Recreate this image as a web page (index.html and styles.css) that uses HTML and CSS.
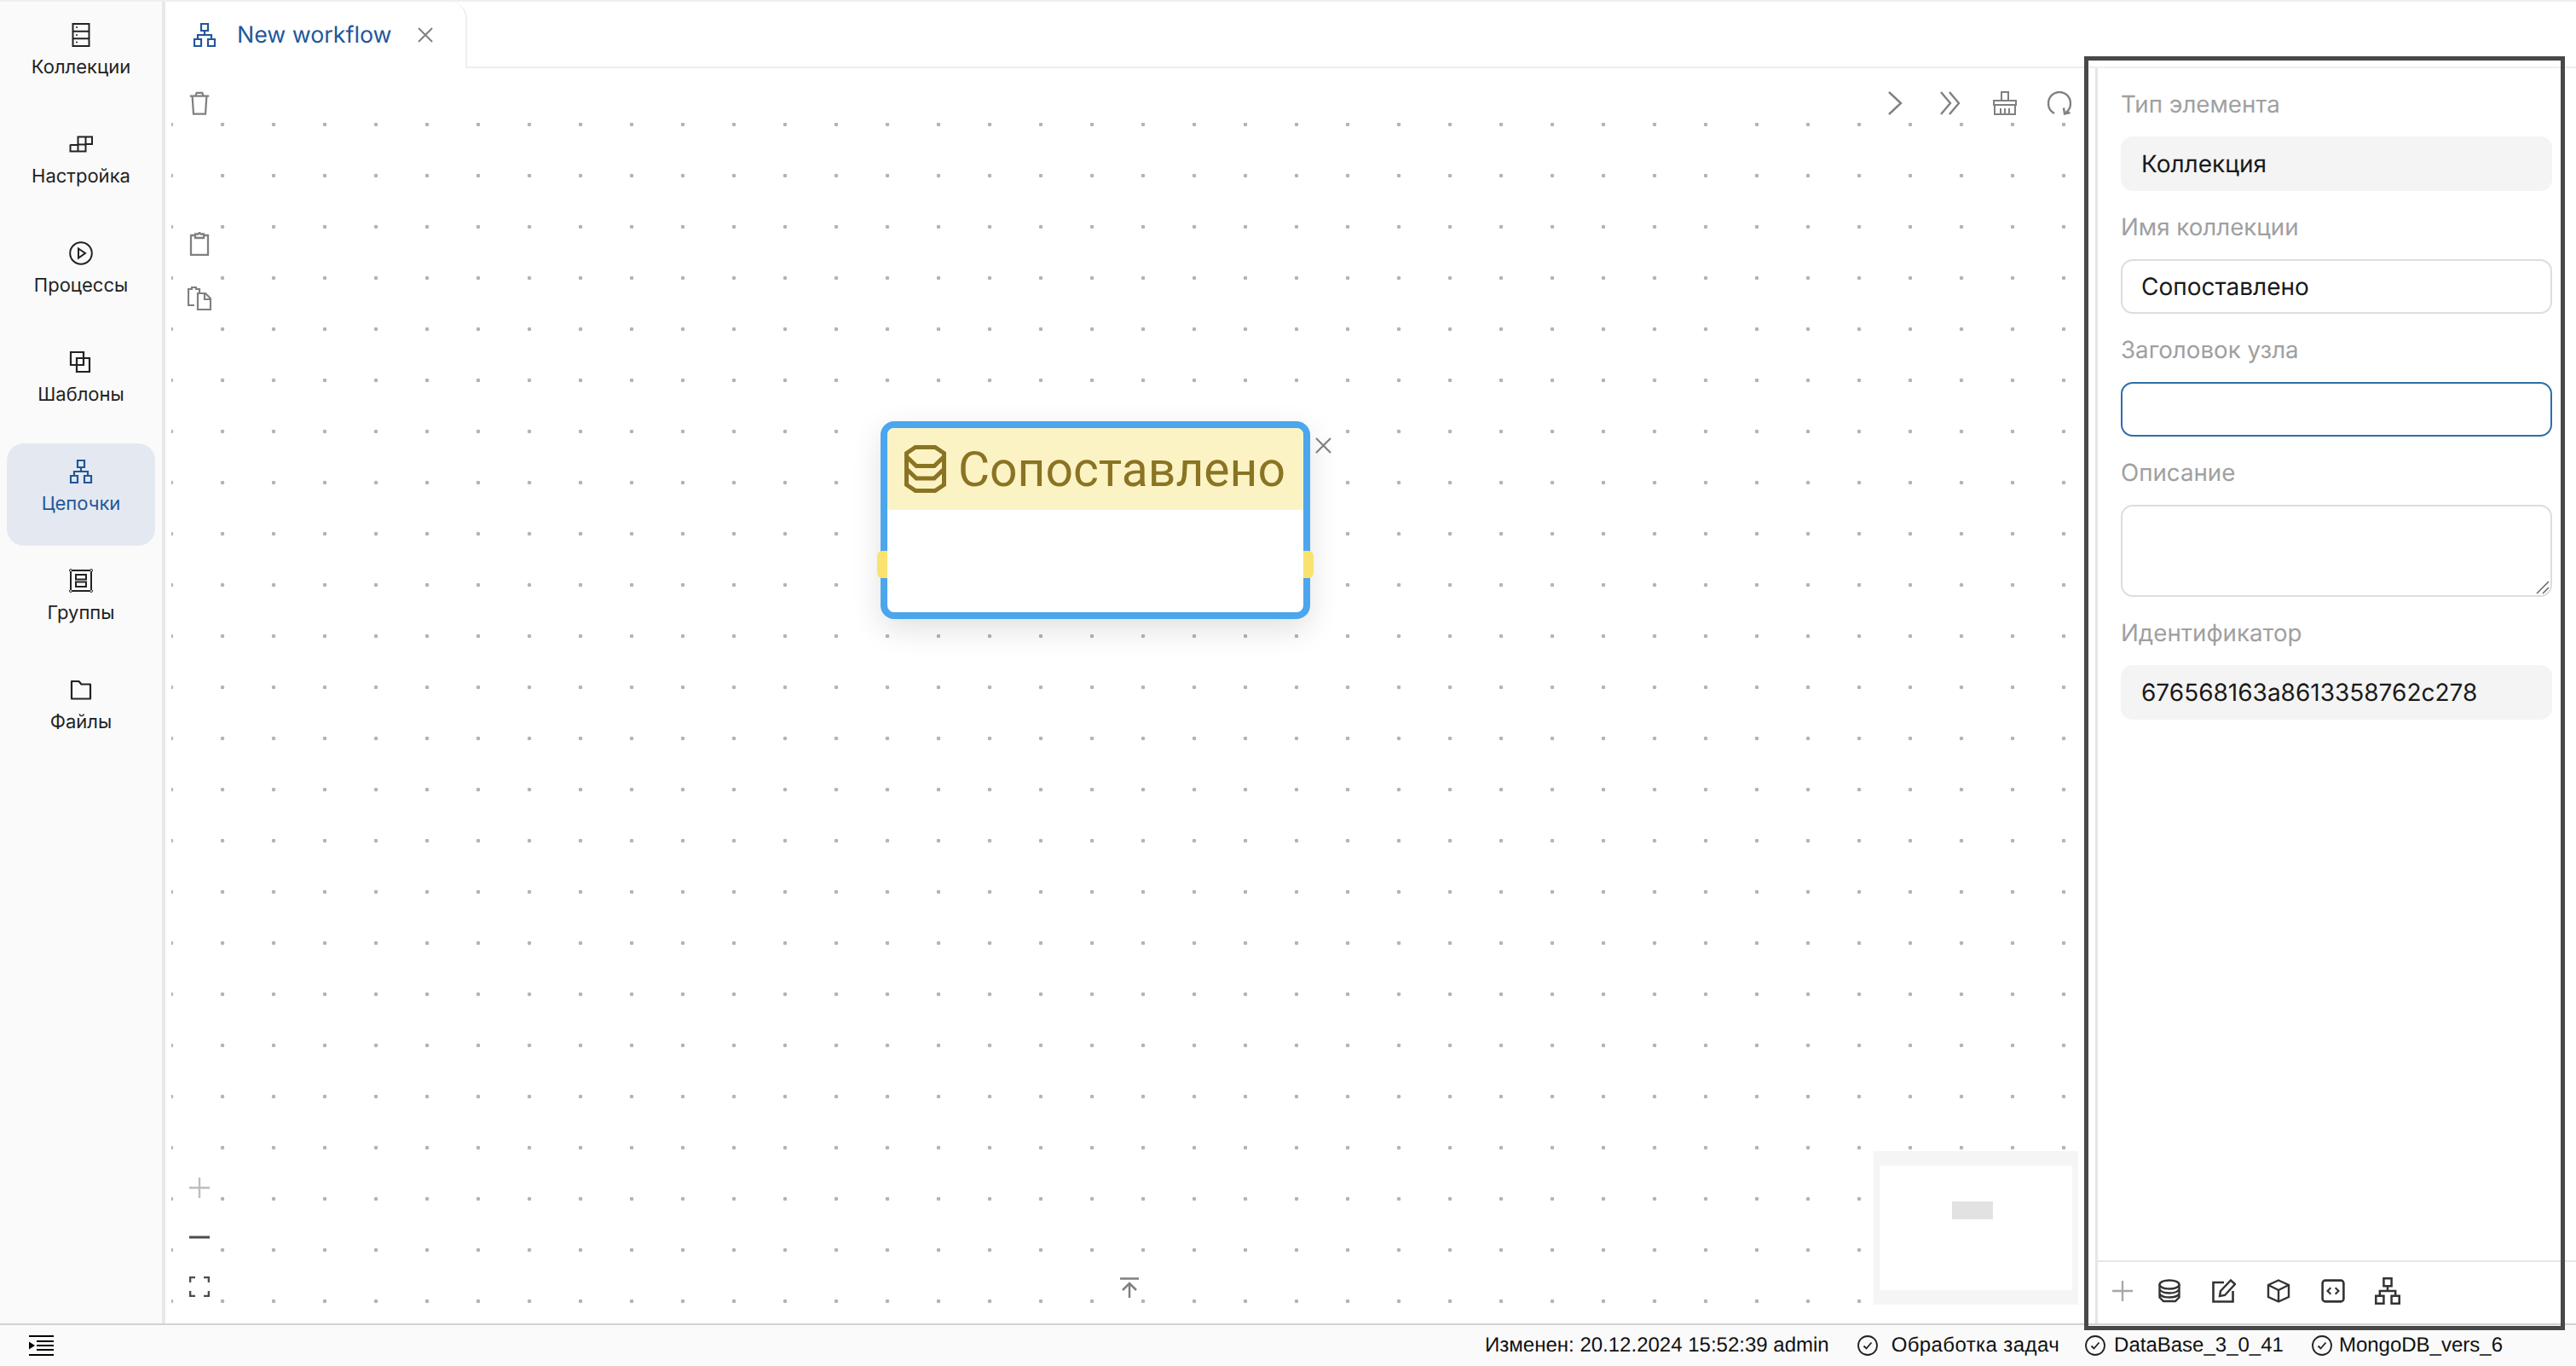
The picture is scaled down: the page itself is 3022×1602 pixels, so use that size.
FILE: index.html
```html
<!DOCTYPE html>
<html lang="ru">
<head>
<meta charset="utf-8">
<title>New workflow</title>
<link rel="stylesheet" href="styles.css">
</head>
<body>
<svg class="defs" width="0" height="0">
  <symbol id="tree" viewBox="0 0 26 28">
    <path d="M9 1h8v8H9zM1 19h8v8H1zM17 19h8v8h-8zM13 9v5M5 19v-5h16v5" fill="none" stroke="currentColor" stroke-width="2.2"/>
  </symbol>
  <symbol id="check" viewBox="0 0 24 24">
    <circle cx="12" cy="12" r="11" fill="none" stroke="currentColor" stroke-width="1.8"/>
    <path d="M7.5 12.5l3 3 6-7" fill="none" stroke="currentColor" stroke-width="1.8"/>
  </symbol>
</svg>
<div class="app">
  <div class="main">
    <nav class="sidebar">
      <a class="nav-item">
        <svg class="nav-icon" viewBox="0 0 28 28"><path d="M4.5 1h19v26h-19zM4.5 9.7h19M4.5 18.3h19" fill="none" stroke="currentColor" stroke-width="2"/><path d="M8 5h2M8 14h2M8 22.500h2" stroke="currentColor" stroke-width="1.600"/></svg>
        <span>Коллекции</span>
      </a>
      <a class="nav-item">
        <svg class="nav-icon" viewBox="0 0 28 28"><path d="M1.500 15h9M1.500 14.500v8h18v-8h-9M10.500 14.500v8M10.500 14.500v-9h16.500v8.500h-7.500M19.500 5.500v9" fill="none" stroke="currentColor" stroke-width="2"/></svg>
        <span>Настройка</span>
      </a>
      <a class="nav-item">
        <svg class="nav-icon" viewBox="0 0 28 28"><circle cx="14" cy="14" r="12.800" fill="none" stroke="currentColor" stroke-width="2"/><path d="M11 8.500l8 5.500-8 5.500z" fill="none" stroke="currentColor" stroke-width="2"/></svg>
        <span>Процессы</span>
      </a>
      <a class="nav-item">
        <svg class="nav-icon" viewBox="0 0 28 28"><path d="M2 2h15v15H2zM9 9h15v16H9z" fill="none" stroke="currentColor" stroke-width="2.200"/></svg>
        <span>Шаблоны</span>
      </a>
      <a class="nav-item active">
        <svg class="nav-icon"><use href="#tree"/></svg>
        <span>Цепочки</span>
      </a>
      <a class="nav-item">
        <svg class="nav-icon" viewBox="0 0 28 28"><path d="M2 2h24v24H2z" fill="none" stroke="currentColor" stroke-width="2"/><path d="M8 7h12v5.500H8zM8 15.500h12V21H8z" fill="none" stroke="currentColor" stroke-width="2"/><circle cx="2" cy="2" r="1.500" fill="#fafafa" stroke="currentColor"/><circle cx="26" cy="2" r="1.500" fill="#fafafa" stroke="currentColor"/><circle cx="2" cy="26" r="1.500" fill="#fafafa" stroke="currentColor"/><circle cx="26" cy="26" r="1.500" fill="#fafafa" stroke="currentColor"/></svg>
        <span>Группы</span>
      </a>
      <a class="nav-item">
        <svg class="nav-icon" viewBox="0 0 28 28"><path d="M3 4h8.500l3 3.500H25v17H3z" fill="none" stroke="currentColor" stroke-width="2.200" stroke-linejoin="round"/></svg>
        <span>Файлы</span>
      </a>
    </nav>
    <div class="work">
      <div class="tabs">
        <div class="tab">
          <svg class="tab-icon"><use href="#tree"/></svg>
          <span class="tab-title">New workflow</span>
          <svg class="tab-close" viewBox="0 0 18 18"><path d="M1 1l16 16M17 1L1 17" stroke="currentColor" stroke-width="2"/></svg>
        </div>
        <div class="tabs-rest"></div>
      </div>
      <div class="work-body">
        <section class="flow">
          <div class="toolbar">
            <button class="tool trash-tool"><svg viewBox="0 0 28 30"><path d="M2 6h24M9 6l1.500-4h7L19 6M5 6l1.500 22.500h15L23 6" fill="none" stroke="currentColor" stroke-width="2.400"/></svg></button>
            <div class="run-tools">
              <button class="tool"><svg viewBox="0 0 28 28"><path d="M6 1l14 13L6 27" fill="none" stroke="currentColor" stroke-width="2.400"/></svg></button>
              <button class="tool"><svg viewBox="0 0 28 28"><path d="M3 1l11 13L3 27M13 1l11 13-11 13" fill="none" stroke="currentColor" stroke-width="2.400"/></svg></button>
              <button class="tool"><svg viewBox="0 0 28 28"><path d="M10 11V1h8v10M1 11h26v5H1zM2 16v11h24V16M9 20v7M14 20v7M19 20v7" fill="none" stroke="currentColor" stroke-width="2"/></svg></button>
              <button class="tool"><svg viewBox="0 0 28 28"><path d="M8 26C3.500 23.500 1 19.500 1 14.500 1 7 6.500 1 14 1s13 6 13 13.500c0 5-2.500 9-7 11.500M19 19.500l1 7 6.500-1.500" fill="none" stroke="currentColor" stroke-width="2.400"/></svg></button>
            </div>
          </div>
          <div class="canvas">
            <div class="paste-tools">
              <button class="tool"><svg viewBox="0 0 28 28"><path d="M9 4H4v23h20V4h-5M9 2.500h3.500L14 .8 15.500 2.500H19V7H9z" fill="none" stroke="currentColor" stroke-width="2.300"/></svg></button>
              <button class="tool"><svg viewBox="0 0 28 28"><path d="M8 22H1V3h4V1h5v2h4v4M12 8h9l6 6v13H12zM20 8v7h7" fill="none" stroke="currentColor" stroke-width="2.200"/></svg></button>
            </div>
            <div class="node">
              <div class="node-head">
                <svg class="node-icon" viewBox="0 0 49 56"><path d="M13 2.500h23L46.500 9.500v37L36 53.500H13L2.500 46.500v-37zM3 14l11 10.500h21L46 14M3 28.500L14 39h21l11-10.500" fill="none" stroke="currentColor" stroke-width="5"/></svg>
                <span class="node-title">Сопоставлено</span>
              </div>
              <i class="port port-in"></i>
              <i class="port port-out"></i>
              <svg class="node-close" viewBox="0 0 19 19"><path d="M1 1l17 17M18 1L1 18" stroke="currentColor" stroke-width="2.200"/></svg>
            </div>
            <div class="zoom-tools">
              <button class="round faint"><svg viewBox="0 0 24 24"><path d="M12 0v24M0 12h24" stroke="currentColor" stroke-width="2.400"/></svg></button>
              <button class="round"><svg viewBox="0 0 24 24"><path d="M0 12h24" stroke="currentColor" stroke-width="3"/></svg></button>
              <button class="round"><svg viewBox="0 0 24 24"><path d="M7 1H1v6M17 1h6v6M1 17v6h6M23 17v6h-6" fill="none" stroke="currentColor" stroke-width="2.600"/></svg></button>
            </div>
            <svg class="fit-top" viewBox="0 0 22 24"><path d="M0 1.500h22M11 24V7M3 15l8-8 8 8" fill="none" stroke="currentColor" stroke-width="2.500"/></svg>
            <div class="minimap"><div class="minimap-view"><i class="minimap-node"></i></div></div>
          </div>
        </section>
        <aside class="panel">
          <div class="form">
            <div class="group">
              <label class="label">Тип элемента</label>
              <div class="field readonly">Коллекция</div>
            </div>
            <div class="group">
              <label class="label">Имя коллекции</label>
              <div class="field">Сопоставлено</div>
            </div>
            <div class="group">
              <label class="label">Заголовок узла</label>
              <div class="field focused"></div>
            </div>
            <div class="group">
              <label class="label">Описание</label>
              <div class="area-wrap">
                <textarea class="field area"></textarea>
                <svg class="grip" viewBox="0 0 16 16"><path d="M15 1L1 15M15 8l-7 7" fill="none" stroke="currentColor" stroke-width="1.500"/></svg>
              </div>
            </div>
            <div class="group">
              <label class="label">Идентификатор</label>
              <div class="field readonly">676568163a8613358762c278</div>
            </div>
          </div>
          <div class="panel-bar">
            <button class="pbtn faint"><svg viewBox="0 0 24 24"><path d="M12 0v24M0 12h24" stroke="currentColor" stroke-width="2.400"/></svg></button>
            <button class="pbtn"><svg viewBox="0 0 26 28"><ellipse cx="13" cy="6.500" rx="11.500" ry="5" fill="none" stroke="currentColor" stroke-width="2.400"/><path d="M1.500 6.500v15L6 26h14l4.500-4.500v-15M1.500 12c2 3.500 7 4.500 11.500 4.500s9.500-1 11.500-4.500M1.500 17.500c2 3 7 4 11.500 4s9.500-1 11.500-4" fill="none" stroke="currentColor" stroke-width="2.400"/></svg></button>
            <button class="pbtn"><svg viewBox="0 0 28 28"><path d="M14 4H1.500v22.500h23V14" fill="none" stroke="currentColor" stroke-width="2.600"/><path d="M9 20l1-6L22 1.500l5 4.500L15 19z" fill="none" stroke="currentColor" stroke-width="2.400"/></svg></button>
            <button class="pbtn"><svg viewBox="0 0 28 28"><path d="M14 1.500l12 5.500v14l-12 5.500L2 21V7zM2 7l12 6 12-6M14 13v13.500" fill="none" stroke="currentColor" stroke-width="2.400"/></svg></button>
            <button class="pbtn"><svg viewBox="0 0 26 26"><rect x="1.500" y="1.500" width="23" height="23" rx="3" fill="none" stroke="currentColor" stroke-width="2.400"/><path d="M10.500 9.500L7 13l3.500 3.500M15.500 9.500L19 13l-3.500 3.500" fill="none" stroke="currentColor" stroke-width="2"/></svg></button>
            <button class="pbtn tall"><svg><use href="#tree"/></svg></button>
          </div>
        </aside>
      </div>
    </div>
  </div>
  <footer class="status">
    <svg class="menu-icon" viewBox="0 0 30 26"><path d="M1 2h29M10 13h20M10 8h20M10 18h20M1 24h29" stroke="currentColor" stroke-width="2.200"/><path d="M1 8.500l7 4.500-7 4.500z" fill="currentColor"/></svg>
    <div class="status-items">
      <span class="modified">Изменен: 20.12.2024 15:52:39 admin</span>
      <span class="st st-tasks"><svg><use href="#check"/></svg>Обработка задач</span>
      <span class="st st-db"><svg><use href="#check"/></svg>DataBase_3_0_41</span>
      <span class="st st-mongo"><svg><use href="#check"/></svg>MongoDB_vers_6</span>
    </div>
  </footer>
</div>
<div class="highlight"></div>
</body>
</html>
```

FILE: styles.css
```css
* { box-sizing: border-box; }
html, body { margin: 0; height: 100%; background: #fff; overflow: hidden; }
body { font-family: Inter, "Noto Sans", sans-serif; color: #222; position: relative; text-rendering: geometricPrecision; }
.defs { position: absolute; }
button { border: 0; background: none; padding: 0; display: flex; align-items: center; justify-content: center; }
svg { display: block; }

.app { height: 1602px; display: flex; flex-direction: column; }
.main { flex: 1; display: flex; min-height: 0; border-top: 2px solid #efefef; }

/* Sidebar */
.sidebar {
  width: 194px; flex: none; background: #fafafa; border-right: 4px solid #e8e8e8;
  padding: 6px 8px 0; display: flex; flex-direction: column; gap: 8px;
}
.nav-item {
  height: 120px; border-radius: 20px; display: flex; flex-direction: column; align-items: center;
  padding-top: 19px; gap: 11px; font-size: 22px; line-height: 26px; color: #222;
}
.nav-icon { width: 28px; height: 28px; }
.nav-item.active { background: #e4e9f1; color: #22579a; }

/* Tabs */
.work { flex: 1; min-width: 0; display: flex; flex-direction: column; }
.tabs { height: 78px; flex: none; display: flex; }
.tab {
  width: 354px; display: flex; align-items: center; padding: 0 0 0 33px; background: #fff;
  border-right: 2px solid #eee; border-top-left-radius: 20px; border-top-right-radius: 20px;
  color: #22579a;
}
.tab-icon { width: 26px; height: 28px; }
.tab-title { margin-left: 25px; width: 181px; font-size: 26.800px; line-height: 34px; white-space: nowrap; }
.tab-close { width: 18px; height: 18px; margin-left: 31px; color: #808080; }
.tabs-rest { flex: 1; border-bottom: 2px solid #eee; }

/* Flow */
.work-body { flex: 1; display: flex; min-height: 0; }
.flow { flex: 1; min-width: 0; display: flex; flex-direction: column; padding-left: 7px; }
.toolbar { height: 64px; flex: none; display: flex; justify-content: space-between; align-items: center; padding: 18px 10px 0 0; color: #808080; }
.tool { width: 64px; height: 28px; color: #808080; }
.tool svg { width: 28px; height: 28px; }
.trash-tool { margin-left: 1px; }
.run-tools { display: flex; }

.canvas {
  flex: 1; position: relative;
  background-image: radial-gradient(circle, #b4b4b4 2px, transparent 2.600px);
  background-size: 60px 60px; background-position: 30px -28px;
}
.paste-tools { position: absolute; left: 1px; top: 128px; display: flex; flex-direction: column; gap: 36px; }
.zoom-tools { position: absolute; left: 7px; top: 1223px; display: flex; flex-direction: column; gap: 6px; }
.round { width: 52px; height: 52px; border-radius: 50%; background: #fff; color: #4d4d4d; }
.round svg { width: 24px; height: 24px; }
.faint { color: #bdbdbd; }
.fit-top { position: absolute; left: 1113px; top: 1354px; width: 22px; height: 24px; color: #808080; }

.node {
  position: absolute; left: 832px; top: 350px; width: 504px; height: 232px;
  background: #fff; border: 8px solid #4ba6ee; border-radius: 16px;
  box-shadow: 0 12px 36px rgba(0, 0, 0, .12);
}
.node-head {
  height: 96px; background: #fcf3c5; color: #8a7423; display: flex; align-items: center;
  padding-left: 20px; gap: 14px; border-radius: 8px 8px 0 0;
}
.node-icon { width: 49px; height: 56px; flex: none; }
.node-title { font-family: Roboto, sans-serif; font-size: 57px; line-height: 66px; white-space: nowrap; padding-top: 1px; }
.port { position: absolute; width: 12px; height: 32px; top: 144px; background: #fae26f; }
.port-in { left: -12px; border-radius: 6px 0 0 6px; }
.port-out { right: -12px; border-radius: 0 6px 6px 0; }
.node-close { position: absolute; left: 502px; top: 11px; width: 19px; height: 19px; color: #808080; }

.minimap { position: absolute; left: 1997px; top: 1206px; width: 240px; height: 180px; background: #f5f5f5; padding: 17px 7px; }
.minimap-view { position: relative; height: 146px; background: #fff; }
.minimap-node { position: absolute; left: 85px; top: 42px; width: 48px; height: 21px; background: #e2e2e2; }

/* Panel */
.panel { width: 564px; flex: none; display: flex; flex-direction: column; border-left: 3px solid #e6e6e6; }
.form { flex: 1; padding: 27px 28px 0 27px; display: flex; flex-direction: column; gap: 27px; }
.group { display: flex; flex-direction: column; gap: 23px; }
.label { font-size: 27.700px; line-height: 30px; color: #a0a0a0; }
.field {
  height: 64px; border: 2px solid #ddd; border-radius: 14px; background: #fff; padding: 0 22px;
  display: flex; align-items: center; font-family: Inter, sans-serif; font-size: 28px; color: #1a1a1a;
}
.readonly { background: #f4f4f4; border-color: #f4f4f4; }
.focused { border-color: #2e6ea8; }
.area-wrap { position: relative; height: 108px; }
.area { width: 100%; height: 108px; outline: 0; display: block; resize: none; }
.grip { position: absolute; right: 3px; bottom: 3px; width: 16px; height: 16px; color: #666; }
.panel-bar { height: 74px; flex: none; border-top: 2px solid #e6e6e6; display: flex; align-items: center; padding: 0 0 4px 17px; }
.pbtn { width: 64px; height: 28px; color: #333; }
.pbtn:first-child { width: 24px; margin-right: 11px; }
.pbtn svg { width: 28px; height: 28px; }
.pbtn.faint { color: #a8a8a8; }
.pbtn.faint svg { width: 24px; height: 24px; }
.pbtn.tall svg { width: 30px; height: 32px; }

/* Status */
.status {
  height: 50px; flex: none; background: #fafafa; border-top: 2px solid #d2d2d2;
  display: flex; align-items: center; justify-content: space-between; padding: 0 86px 0 33px;
  font-family: "Liberation Sans", Arial, sans-serif; font-size: 24px; color: #111;
}
.menu-icon { width: 30px; height: 26px; color: #000; }
.status-items { display: flex; align-items: center; }
.st { display: flex; align-items: center; }
.st svg { width: 24px; height: 24px; flex: none; color: #222; }
.st-tasks { margin-left: 33px; gap: 16px; letter-spacing: .4px; }
.st-db { margin-left: 30px; gap: 10px; }
.st-mongo { margin-left: 33px; gap: 8px; }

/* Annotation frame */
.highlight { position: absolute; left: 2445px; top: 66px; width: 564px; height: 1494px; border: 5px solid #484848; pointer-events: none; }
```
